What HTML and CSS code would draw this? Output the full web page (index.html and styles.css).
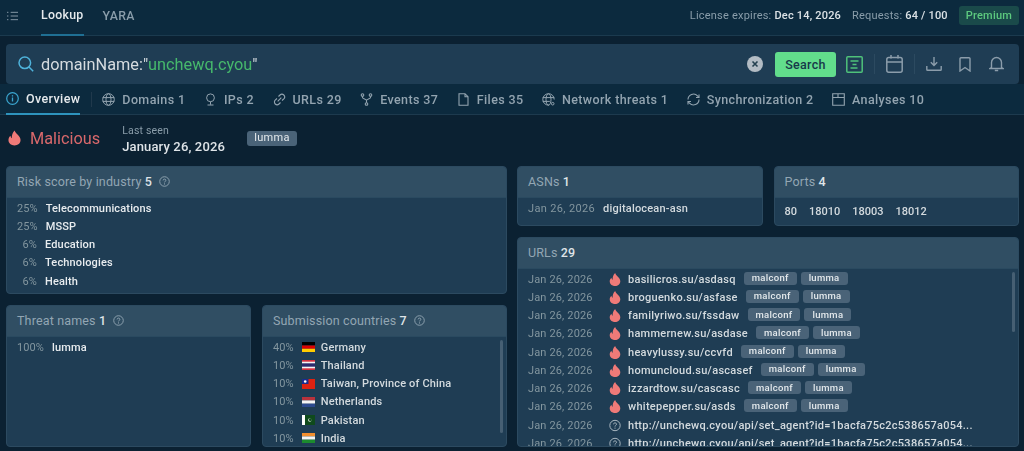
FILE: index.html
```html
<!DOCTYPE html>
<html lang="en">
<head>
<meta charset="utf-8">
<title>Lookup</title>
<link rel="stylesheet" href="styles.css">
</head>
<body>
<svg class="defs" aria-hidden="true">
  <symbol id="flame" viewBox="0 0 14 16"><path d="M7.2 0c.5 2 1.8 3.1 3.3 4.6C12.200 6.300 13.500 8 13.500 10.100 13.500 13.600 10.700 16 7 16S.5 13.600.5 10.200C.5 8.300 1.500 6.800 2.700 5.700c.1 1.300.6 2.100 1.400 2.500C3.900 5 5 2 7.200 0z"/></symbol>
  <symbol id="help" viewBox="0 0 12 12"><circle cx="6" cy="6" r="5.200" fill="none" stroke="currentColor"/><path d="M4.500 4.800C4.500 3.900 5.200 3.400 6 3.400s1.500.5 1.500 1.300c0 1.200-1.500 1.200-1.500 2.300" fill="none" stroke="currentColor"/><circle cx="6" cy="8.600" r=".6" fill="currentColor"/></symbol>
</svg>

<header class="topbar">
  <svg class="menu-icon" viewBox="0 0 12 10"><path d="M0 1h1.500M0 5h1.500M0 9h1.500M4 1h8M4 5h8M4 9h8" stroke="currentColor" fill="none"/></svg>
  <nav class="main-nav">
    <span class="main-tab active">Lookup</span>
    <span class="main-tab">YARA</span>
  </nav>
  <div class="license">
    <span>License expires: <b>Dec 14, 2026</b></span>
    <span>Requests: <b>64 / 100</b></span>
    <span class="premium">Premium</span>
  </div>
</header>

<section class="searchbar">
  <svg class="search-icon" viewBox="0 0 16 16"><circle cx="6.800" cy="6.800" r="5.800" fill="none" stroke="currentColor" stroke-width="1.500"/><path d="M11 11l4.200 4.200" stroke="currentColor" stroke-width="1.500"/></svg>
  <div class="query">domainName:"<span class="query-value">unchewq.cyou</span>"</div>
  <svg class="clear" viewBox="0 0 16 16"><circle cx="8" cy="8" r="8" fill="#b3bcc4"/><path d="M5.500 5.500l5 5M10.500 5.500l-5 5" stroke="#24404f" stroke-width="1.600"/></svg>
  <button class="search-btn">Search</button>
  <svg class="tool tool-green" viewBox="0 0 17 17"><rect x=".8" y=".8" width="15.400" height="15.400" rx="1" fill="none" stroke="currentColor" stroke-width="1.500"/><path d="M4.500 5h8M6.500 8.500h4M4.500 12h7" stroke="currentColor" stroke-width="1.500" fill="none"/></svg>
  <span class="sep"></span>
  <svg class="tool tool-cal" viewBox="0 0 17 18"><rect x=".8" y="2.500" width="15.400" height="14.700" rx="2" fill="none" stroke="currentColor" stroke-width="1.500"/><path d="M.8 7h15.400M5 0v3.500M12 0v3.500" stroke="currentColor" stroke-width="1.500" fill="none"/></svg>
  <span class="sep"></span>
  <svg class="tool tool-down" viewBox="0 0 16 14"><path d="M8 0v8M4.800 5.200L8 8.400l3.200-3.200M.8 9v3.500a.8.8 0 0 0 .8.8h12.800a.8.8 0 0 0 .8-.8V9" stroke="currentColor" stroke-width="1.400" fill="none"/></svg>
  <svg class="tool tool-mark" viewBox="0 0 12 15"><path d="M1 1.800A1 1 0 0 1 2 .8h8a1 1 0 0 1 1 1V14L6 10.500 1 14z" stroke="currentColor" stroke-width="1.400" fill="none"/></svg>
  <svg class="tool tool-bell" viewBox="0 0 15 16"><path d="M2.500 11.500V6.500a5 5 0 0 1 10 0v5l1.500 1H1zM5.800 14.500h3.400" stroke="currentColor" stroke-width="1.400" fill="none"/></svg>
</section>

<nav class="tabs">
  <span class="tab active">
    <svg class="tab-icon" viewBox="0 0 13 13"><circle cx="6.500" cy="6.500" r="5.800" fill="none" stroke="currentColor" stroke-width="1.200"/><path d="M6.500 5.500v4M6.500 3.200v1.200" stroke="currentColor" stroke-width="1.300"/></svg>
    Overview
  </span>
  <span class="tab-sep"></span>
  <span class="tab">
    <svg class="tab-icon" viewBox="0 0 13 13"><g fill="none" stroke="currentColor"><circle cx="6.500" cy="6.500" r="5.800"/><ellipse cx="6.500" cy="6.500" rx="2.500" ry="5.800"/><path d="M.8 4.600h11.400M.8 8.400h11.400"/></g></svg>
    Domains 1
  </span>
  <span class="tab">
    <svg class="tab-icon" viewBox="0 0 13 13"><g fill="none" stroke="currentColor"><circle cx="6.500" cy="4.800" r="3.900"/><path d="M6.500 8.700v3M3.500 12h6"/></g></svg>
    IPs 2
  </span>
  <span class="tab">
    <svg class="tab-icon" viewBox="0 0 13 13"><g fill="none" stroke="currentColor" stroke-width="1.100"><path d="M5.500 3.500l1.500-1.500a2.500 2.500 0 0 1 3.800 3.800L9 7.500"/><path d="M7.500 9.500L6 11a2.500 2.500 0 0 1-3.800-3.800L4 5.500"/><path d="M4.700 8.300l3.600-3.600"/></g></svg>
    URLs 29
  </span>
  <span class="tab">
    <svg class="tab-icon" viewBox="0 0 13 13"><g fill="none" stroke="currentColor" stroke-width="1.100"><circle cx="2.500" cy="2" r="1.300"/><circle cx="10.500" cy="2" r="1.300"/><circle cx="6.500" cy="11" r="1.300"/><path d="M2.500 3.300v1.200c0 1.500 4 1.500 4 3v2.200M10.500 3.300v1.200c0 1.500-4 1.500-4 3"/></g></svg>
    Events 37
  </span>
  <span class="tab">
    <svg class="tab-icon" viewBox="0 0 13 13"><path d="M2 .7h6l3 3v8.600H2zM8 .7v3h3" fill="none" stroke="currentColor" stroke-width="1.100"/></svg>
    Files 35
  </span>
  <span class="tab">
    <svg class="tab-icon" viewBox="0 0 13 13"><g fill="none" stroke="currentColor"><path d="M7 12.100A5.700 5.700 0 1 1 12.200 6.500"/><ellipse cx="6.500" cy="6.500" rx="2.500" ry="5.700"/><path d="M.8 4.600h11.400M.8 8.400h7"/><circle cx="10.700" cy="10.700" r="1.300"/></g></svg>
    Network threats 1
  </span>
  <span class="tab">
    <svg class="tab-icon" viewBox="0 0 13 13"><g fill="none" stroke="currentColor" stroke-width="1.100"><path d="M1 6.500A5.500 5.500 0 0 1 10.500 2.800L12 4.500"/><path d="M12 6.500A5.500 5.500 0 0 1 2.500 10.200L1 8.500"/><path d="M12 1.500v3H9M1 11.500v-3h3"/></g></svg>
    Synchronization 2
  </span>
  <span class="tab">
    <svg class="tab-icon" viewBox="0 0 13 13"><path d="M.7.700h11.600v11.600H.7zM.7 4.500h11.600M6 .7v3.800" fill="none" stroke="currentColor" stroke-width="1.100"/></svg>
    Analyses 10
  </span>
</nav>

<section class="verdict">
  <svg class="verdict-flame"><use href="#flame"/></svg>
  <span class="verdict-label">Malicious</span>
  <div class="seen">
    <span class="seen-label">Last seen</span>
    <span class="seen-date">January 26, 2026</span>
  </div>
  <span class="tag verdict-tag">lumma</span>
</section>

<main class="grid">
  <div class="col">
    <article class="card risk">
      <h2 class="card-head">Risk score by industry <b>5</b><svg class="help"><use href="#help"/></svg></h2>
      <div class="card-body">
        <div class="row"><span class="pct">25%</span><b>Telecommunications</b></div>
        <div class="row"><span class="pct">25%</span><b>MSSP</b></div>
        <div class="row"><span class="pct">6%</span><b>Education</b></div>
        <div class="row"><span class="pct">6%</span><b>Technologies</b></div>
        <div class="row"><span class="pct">6%</span><b>Health</b></div>
      </div>
    </article>
    <div class="pair grow">
      <article class="card">
        <h2 class="card-head">Threat names <b>1</b><svg class="help"><use href="#help"/></svg></h2>
        <div class="card-body">
          <div class="row"><span class="pct">100%</span><b>lumma</b></div>
        </div>
      </article>
      <article class="card">
        <h2 class="card-head">Submission countries <b>7</b><svg class="help"><use href="#help"/></svg></h2>
        <div class="card-body scroll">
          <div class="row"><span class="pct">40%</span>
            <svg class="flag" viewBox="0 0 13 10"><path fill="#000" d="M0 0h13v3.400H0z"/><path fill="#d00" d="M0 3.400h13v3.300H0z"/><path fill="#fc0" d="M0 6.700h13V10H0z"/></svg>
            <span class="country">Germany</span></div>
          <div class="row"><span class="pct">10%</span>
            <svg class="flag" viewBox="0 0 13 10"><path fill="#d32f3f" d="M0 0h13v10H0z"/><path fill="#f4f4f4" d="M0 1.700h13v6.600H0z"/><path fill="#2d2a6e" d="M0 3.300h13v3.400H0z"/></svg>
            <span class="country">Thailand</span></div>
          <div class="row"><span class="pct">10%</span>
            <svg class="flag" viewBox="0 0 13 10"><path fill="#dd2211" d="M0 0h13v10H0z"/><path fill="#1a2c8f" d="M0 0h6.500v5H0z"/><circle cx="3.200" cy="2.500" r="1.300" fill="#fff"/></svg>
            <span class="country">Taiwan, Province of China</span></div>
          <div class="row"><span class="pct">10%</span>
            <svg class="flag" viewBox="0 0 13 10"><path fill="#b8323c" d="M0 0h13v3.400H0z"/><path fill="#f4f4f4" d="M0 3.400h13v3.300H0z"/><path fill="#2c4a8f" d="M0 6.700h13V10H0z"/></svg>
            <span class="country">Netherlands</span></div>
          <div class="row"><span class="pct">10%</span>
            <svg class="flag" viewBox="0 0 13 10"><path fill="#0f4a1c" d="M0 0h13v10H0z"/><path fill="#fff" d="M0 0h3v10H0z"/><circle cx="7.800" cy="5" r="1.700" fill="#dfe8df"/><circle cx="8.300" cy="4.700" r="1.400" fill="#0f4a1c"/></svg>
            <span class="country">Pakistan</span></div>
          <div class="row"><span class="pct">10%</span>
            <svg class="flag" viewBox="0 0 13 10"><path fill="#f28f2e" d="M0 0h13v3.400H0z"/><path fill="#f4f4f4" d="M0 3.400h13v3.300H0z"/><path fill="#1c8a2e" d="M0 6.700h13V10H0z"/></svg>
            <span class="country">India</span></div>
          <span class="scrollbar bar-countries"></span>
        </div>
      </article>
    </div>
  </div>
  <div class="col">
    <div class="pair">
      <article class="card small">
        <h2 class="card-head">ASNs <b>1</b></h2>
        <div class="card-body">
          <div class="row"><span class="date asn-date">Jan 26, 2026</span><b class="light">digitalocean-asn</b></div>
        </div>
      </article>
      <article class="card small">
        <h2 class="card-head">Ports <b>4</b></h2>
        <div class="card-body ports">
          <span>80</span><span>18010</span><span>18003</span><span>18012</span>
        </div>
      </article>
    </div>
    <article class="card grow">
      <h2 class="card-head">URLs <b>29</b></h2>
      <div class="card-body scroll urls">
        <div class="url"><span class="date">Jan 26, 2026</span><svg class="flame"><use href="#flame"/></svg><span class="link">basilicros.su/asdasq</span><span class="tag">malconf</span><span class="tag">lumma</span></div>
        <div class="url"><span class="date">Jan 26, 2026</span><svg class="flame"><use href="#flame"/></svg><span class="link">broguenko.su/asfase</span><span class="tag">malconf</span><span class="tag">lumma</span></div>
        <div class="url"><span class="date">Jan 26, 2026</span><svg class="flame"><use href="#flame"/></svg><span class="link">familyriwo.su/fssdaw</span><span class="tag">malconf</span><span class="tag">lumma</span></div>
        <div class="url"><span class="date">Jan 26, 2026</span><svg class="flame"><use href="#flame"/></svg><span class="link">hammernew.su/asdase</span><span class="tag">malconf</span><span class="tag">lumma</span></div>
        <div class="url"><span class="date">Jan 26, 2026</span><svg class="flame"><use href="#flame"/></svg><span class="link">heavylussy.su/ccvfd</span><span class="tag">malconf</span><span class="tag">lumma</span></div>
        <div class="url"><span class="date">Jan 26, 2026</span><svg class="flame"><use href="#flame"/></svg><span class="link">homuncloud.su/ascasef</span><span class="tag">malconf</span><span class="tag">lumma</span></div>
        <div class="url"><span class="date">Jan 26, 2026</span><svg class="flame"><use href="#flame"/></svg><span class="link">izzardtow.su/cascasc</span><span class="tag">malconf</span><span class="tag">lumma</span></div>
        <div class="url"><span class="date">Jan 26, 2026</span><svg class="flame"><use href="#flame"/></svg><span class="link">whitepepper.su/asds</span><span class="tag">malconf</span><span class="tag">lumma</span></div>
        <div class="url"><span class="date">Jan 26, 2026</span><svg class="unknown"><use href="#help"/></svg><span class="link">http://unchewq.cyou/api/set_agent?id=1bacfa75c2c538657a054...</span></div>
        <div class="url"><span class="date">Jan 26, 2026</span><svg class="unknown"><use href="#help"/></svg><span class="link">http://unchewq.cyou/api/set_agent?id=1bacfa75c2c538657a054...</span></div>
        <span class="scrollbar bar-urls"></span>
      </div>
    </article>
  </div>
</main>
</body>
</html>
```
FILE: styles.css
```css
* { box-sizing: border-box; }
html, body { height: 100%; }
body {
  margin: 0;
  height: 451px;
  overflow: hidden;
  display: flex;
  flex-direction: column;
  background: #0b2132;
  color: #dfe4e8;
  font-family: Roboto, "Liberation Sans", sans-serif;
  font-size: 11px;
  filter: blur(.4px);
}
.defs { display: none; }
b { font-weight: 500; }

.topbar {
  height: 36px;
  flex: none;
  display: flex;
  align-items: center;
  padding: 0 5px 0 7px;
  background: #0c2a3e;
  border-bottom: 1px solid #1b3a4e;
}
.menu-icon { width: 11px; height: 10px; color: #8fa0ad; margin-top: -4px; }
.main-nav { display: flex; gap: 19px; margin-left: 23px; height: 100%; }
.main-tab {
  display: flex;
  align-items: center;
  height: 36px;
  padding-bottom: 5px;
  font-size: 12.300px;
  font-weight: 500;
  letter-spacing: .3px;
  color: #8a9daa;
}
.main-tab.active { color: #e6eaed; border-bottom: 2px solid #1f6f93; }
.license {
  margin-left: auto;
  display: flex;
  align-items: center;
  gap: 11px;
  margin-top: -5px;
  color: #8a9daa;
  font-size: 11px;
  letter-spacing: .2px;
}
.license b { color: #dce2e6; }
.premium {
  padding: 3px 7px;
  border-radius: 3px;
  background: #1a4a4a;
  color: #5dca7f;
  font-weight: 500;
}

.searchbar {
  flex: none;
  height: 40px;
  margin: 8px 5px 0 6px;
  padding: 0 15px 0 12px;
  display: flex;
  align-items: center;
  border-radius: 4px;
  background: #1f3d54;
}
.search-icon { width: 16px; height: 16px; color: #4fb3db; flex: none; }
.query {
  margin-left: 7px;
  font-size: 16.300px;
  color: #d6dce0;
  white-space: nowrap;
}
.query-value { color: #46b96c; }
.clear { width: 16px; height: 16px; margin-left: auto; flex: none; }
.search-btn {
  margin-left: 12px;
  width: 61px;
  height: 25px;
  border: 0;
  border-radius: 3px;
  background: #62dd8c;
  color: #17384a;
  font: 500 12.500px Roboto, sans-serif;
  letter-spacing: .3px;
}
.tool { flex: none; color: #8c9dab; }
.tool-green { width: 17px; height: 17px; margin-left: 10px; color: #4fc27a; }
.sep { width: 1px; height: 20px; background: #2c4a60; margin-left: 11px; flex: none; }
.tool-cal { width: 17px; height: 18px; margin-left: 11px; }
.tool-down { width: 16px; height: 14px; margin-left: 11px; }
.tool-mark { width: 12px; height: 15px; margin-left: 17px; }
.tool-bell { width: 15px; height: 16px; margin-left: 18px; }

.tabs {
  flex: none;
  height: 31px;
  margin-top: 0;
  padding: 0 6px;
  display: flex;
  gap: 18.500px;
  border-bottom: 1px solid #1d3a4e;
  background: #0c2a3e;
}
.tab {
  display: flex;
  align-items: center;
  gap: 7px;
  font-size: 12.500px;
  font-weight: 500;
  letter-spacing: .38px;
  color: #93a4b0;
  white-space: nowrap;
}
.tab.active { color: #e6eaed; border-bottom: 2px solid #2e93bd; margin-bottom: -1px; }
.tab.active .tab-icon { color: #3ba6d0; }
.tab-icon { width: 13px; height: 13px; flex: none; }
.tab-sep { width: 1px; height: 15px; margin: 8px -8px 0 -8px; background: #20394c; }

.verdict {
  flex: none;
  height: 46px;
  padding: 0 8px;
  display: flex;
  align-items: center;
}
.verdict-flame { width: 13px; height: 16px; fill: #ef7a78; flex: none; }
.verdict-label { margin-left: 9px; font-size: 16.300px; color: #d9686b; }
.seen { margin-left: 22px; display: flex; flex-direction: column; gap: 2px; padding-top: 1px; }
.seen-label { font-size: 10.500px; letter-spacing: .2px; color: #8a9daa; }
.seen-date { font-size: 13px; font-weight: 500; letter-spacing: .15px; color: #dfe4e8; }

.tag {
  flex: none;
  padding: 0 8px 1px;
  height: 13px;
  display: inline-flex;
  align-items: center;
  border-radius: 3px;
  background: #4a6378;
  color: #e4e9ec;
  font-size: 9.500px;
  font-weight: 500;
  letter-spacing: .3px;
}
.verdict-tag { margin-left: 22px; height: 15px; width: 50px; justify-content: center; font-size: 11px; font-weight: 400; }

.grid {
  flex: 1;
  min-height: 0;
  display: grid;
  grid-template-columns: 501px 502px;
  gap: 10px;
  padding: 5px 5px 4px 6px;
}
.col { display: flex; flex-direction: column; gap: 11px; min-height: 0; }
.pair { display: grid; grid-template-columns: 1fr 1fr; gap: 11px; min-height: 0; }
.grow { flex: 1; }
.card {
  display: flex;
  flex-direction: column;
  min-height: 0;
  overflow: hidden;
  border: 1px solid #2c4a60;
  border-radius: 4px;
  background: #1f3d54;
}
.card.small { height: 60px; }
.risk { height: 128px; flex: none; }
.card-head {
  flex: none;
  height: 31px;
  margin: 0;
  padding: 0 10px 2px;
  display: flex;
  align-items: center;
  background: #304e63;
  border-bottom: 1px solid #2a4a60;
  font-size: 12.500px;
  font-weight: 400;
  letter-spacing: .15px;
  color: #93a6b3;
  white-space: pre;
}
.card-head b { color: #dfe4e8; }
.help { width: 11px; height: 11px; color: #93a6b3; margin-left: 7px; flex: none; }

.card-body { position: relative; flex: 1; min-height: 0; overflow: hidden; padding: 1px 10px 0; }
.row {
  height: 18.250px;
  display: flex;
  align-items: center;
  white-space: nowrap;
}
.row b { color: #e8ecef; letter-spacing: .15px; }
.pct { min-width: 20px; margin-right: 8px; text-align: right; color: #83969f; letter-spacing: .1px; }
.flag { width: 13px; height: 10px; flex: none; margin: 0 6px 0 0; }
.country { color: #d3dade; font-weight: 500; letter-spacing: .15px; }
.date { color: #83969f; letter-spacing: .15px; white-space: nowrap; }
.asn-date { margin-right: 8px; letter-spacing: .35px; }
.row b.light { color: #d3dade; letter-spacing: .2px; }

.ports { display: flex; gap: 12px; padding-top: 7px; color: #d3dade; font-weight: 500; }

.card-body.urls { padding-top: 1px; }
.url { height: 18.250px; display: flex; align-items: center; white-space: nowrap; }
.url .date { width: 81px; flex: none; }
.flame, .unknown { flex: none; }
.flame { width: 12px; height: 13px; margin-right: 7px; fill: #ef7a78; }
.unknown { width: 12px; height: 13px; margin-right: 7px; color: #a8b6bf; }
.link { margin-right: 8px; color: #d3dade; font-weight: 500; letter-spacing: .27px; }
.url .tag { margin: -2px 4px 0 0; }

.scrollbar { position: absolute; right: 3px; width: 3px; border-radius: 2px; background: #465f73; }
.bar-countries { top: 3px; height: 93px; }
.bar-urls { top: 3px; height: 60px; }
```
